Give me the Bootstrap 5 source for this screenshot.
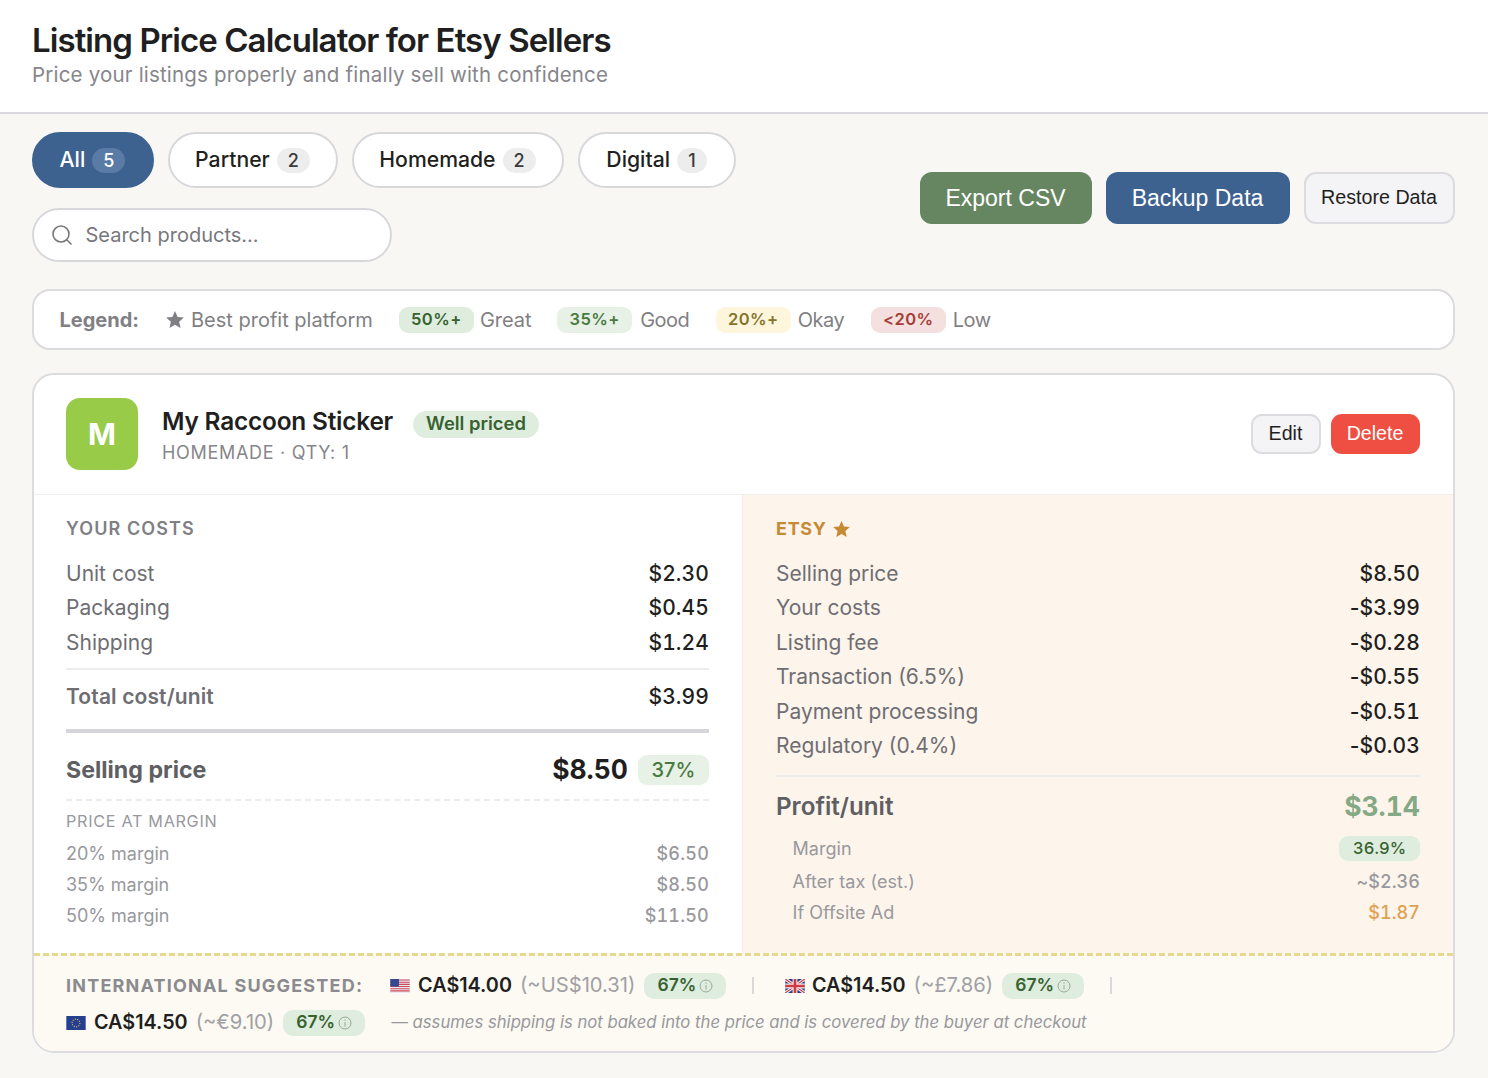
<!DOCTYPE html>
<html lang="en">
<head>
  <meta charset="UTF-8">
  <title>Listing Price Calculator for Etsy Sellers</title>
  <link href="https://cdn.jsdelivr.net/npm/bootstrap@5.3.3/dist/css/bootstrap.min.css" rel="stylesheet">
  <style>
    body { background: #f8f7f4; font-family: Inter, "Liberation Sans", sans-serif; color: #1f1f21; }
    .top-head { background: #fff; border-bottom: 2px solid #d9d9dd; height: 114px; padding: 20px 32px 0; }
    .top-head h1 { font-size: 33px; font-weight: 600; letter-spacing: -.93px; line-height: 40px; margin: 0; color: #1f1f21; }
    .top-head p { font-size: 20.5px; letter-spacing: .19px; line-height: 28px; margin: 1px 0 0; color: #86868b; }
    .page-wrap { padding: 18px 33.5px 0 31.5px; }
    .tool-left { width: 720px; }
    .pill-tab { height: 56px; border: 2px solid #d8d8dc; border-radius: 28px; background: #fff; padding: 0; font-size: 21.2px; font-weight: 500; color: #1f1f21; gap: 7px; }
    .pill-tab.is-on { background: #3d6290; border-color: #3d6290; color: #fff; }
    .tab-all { width: 122px; }
    .tab-partner { width: 170px; }
    .tab-homemade { width: 212px; }
    .tab-digital { width: 158px; }
    .pill-count { font-size: 18px; height: 25px; min-width: 24px; padding: 0 11px; border-radius: 13px; background: #ededee; color: #3a3a3c; display: flex; align-items: center; justify-content: center; }
    .is-on .pill-count { background: #5a7ba5; color: #fff; }
    .search-box { width: 360px; height: 54px; margin-top: 20px; border: 2px solid #d8d8dc; border-radius: 28px; background: #fff; padding-left: 17px; gap: 13px; font-size: 20px; color: #77777c; }
    .act-row { gap: 14px; margin-top: 2px; }
    .act-btn { font-family: "Liberation Sans", sans-serif; border-radius: 12px; height: 52px; border: 1px solid transparent; font-size: 23px; color: #fff; padding: 0; }
    .act-btn:hover { color: #fff; }
    .btn-export { width: 172px; background: #668661; }
    .btn-backup { width: 184px; background: #3d6290; }
    .btn-restore { width: 151px; background: #f4f4f6; border: 2px solid #dcdce0; color: #1f1f21; font-size: 19.7px; }
    .legend-bar { margin-top: 27px; height: 61px; background: #fff; border: 2px solid #dcdcdf; border-radius: 18px; padding-left: 26px; font-size: 20px; color: #7f7f84; }
    .legend-title { font-weight: 700; margin-right: 27px; }
    .legend-txt { margin-left: 7px; margin-right: 26px; }
    .legend-great { margin-left: 6px; margin-right: 25.5px; }
    .legend-word { letter-spacing: -.5px; margin-right: 26.5px; }
    .legend-good { margin-left: 8px; }
    .tag-pct { height: 26px; width: 75px; border-radius: 9px; font-size: 16.5px; font-weight: 600; letter-spacing: .45px; display: inline-flex; align-items: center; justify-content: center; }
    .tone-great { background: #dfeddf; color: #37622f; }
    .tone-good { background: #e7f1e5; color: #4a7a43; }
    .tone-okay { background: #fdf6dc; color: #86742a; }
    .tone-low { background: #f3e0df; color: #a53c38; }
    .prod-card { margin-top: 23px; background: #fff; border: 2px solid #dcdce0; border-radius: 22px; overflow: hidden; }
    .prod-head { height: 120px; padding: 0 33px 0 32.5px; border-bottom: 1px solid #eeeeef; gap: 24px; }
    .prod-logo { width: 72px; height: 72px; background: #97cb48; border-radius: 14px; color: #fff; font-size: 30px; font-weight: 700; margin-bottom: 1px; }
    .prod-name { font-size: 24.4px; font-weight: 600; line-height: 32px; letter-spacing: -.2px; }
    .prod-tag { background: #dfeddf; color: #37622f; font-size: 18.4px; font-weight: 600; height: 27px; border-radius: 14px; padding: 0 13px; margin: 6px 0 0 20px; display: flex; align-items: center; }
    .prod-meta { font-size: 18px; letter-spacing: .7px; color: #86868b; line-height: 24px; margin-top: 3px; }
    .small-btn { font-family: "Liberation Sans", sans-serif; height: 40px; border-radius: 11px; padding: 0; font-size: 19.6px; margin-bottom: 1px; }
    .btn-edit { width: 70px; background: #f4f4f6; border: 2px solid #dcdce0; color: #1f1f21; }
    .btn-del { width: 89px; background: #ee4f42; border: 0; color: #fff; margin-left: 10px; }
    .btn-del:hover { color: #fff; background: #ee4f42; }
    .cost-col { width: 709.5px; padding: 21px 33px 0 32.5px; height: 458px; border-right: 1px solid #eeeeef; }
    .plat-col { flex: 1; padding: 21px 32.5px 0 33px; background: #fdf4eb; height: 458px; }
    .sec-title { font-size: 18px; font-weight: 600; letter-spacing: 1.1px; color: #7f7f84; line-height: 26px; margin-bottom: 14.5px; }
    .sec-orange { color: #c68a34; font-weight: 700; letter-spacing: .7px; gap: 6px; }
    .cost-line { font-size: 21px; line-height: 34.5px; color: #6e6e73; }
    .cost-line b { font-weight: 500; color: #1f1f21; letter-spacing: .1px; font-variant-numeric: tabular-nums; }
    .neg-sign { font-variant-numeric: normal; }
    .total-line { border-top: 2px solid #ececee; margin-top: 8px; padding-top: 10px; font-weight: 600; height: 60.5px; letter-spacing: .13px; }
    .thick-rule { border-top: 4px solid #d5d5da; }
    .sell-line { height: 66px; padding-top: 9px; font-size: 23.2px; font-weight: 700; color: #5e5e63; }
    .sell-price { font-size: 26.5px; color: #1f1f21; margin-right: 10px; font-variant-numeric: tabular-nums; }
    .sell-tag { width: 71px; height: 30px; border-radius: 9px; background: #e7f1e5; color: #4a7a43; font-size: 20px; font-weight: 500; display: flex; align-items: center; justify-content: center; }
    .margin-box { border-top: 2px dashed #ececee; padding-top: 8px; }
    .margin-head { font-size: 16.2px; letter-spacing: .7px; color: #98989d; line-height: 24px; margin-bottom: 5px; }
    .margin-line { font-size: 18px; line-height: 31px; color: #98989d; }
    .margin-line b { font-weight: 500; letter-spacing: .2px; font-variant-numeric: tabular-nums; }
    .profit-rule { border-top: 2px solid #ececec; margin-top: 11px; }
    .profit-line { height: 54.5px; padding-top: 6px; font-size: 24.2px; font-weight: 600; color: #5e5e63; }
    .profit-val { font-size: 26.5px; font-weight: 700; color: #85a985; font-variant-numeric: tabular-nums; }
    .sub-line { font-size: 18px; letter-spacing: .05px; line-height: 31.5px; color: #98989d; padding-left: 16.5px; }
    .sub-line b { font-weight: 500; font-variant-numeric: tabular-nums; }
    .sub-first { height: 34.5px; }
    .tag-margin { width: 81px; height: 25px; border-radius: 9px; background: #dfeddf; color: #37622f; font-size: 16.5px; font-weight: 500; display: flex; align-items: center; justify-content: center; font-variant-numeric: tabular-nums; }
    .val-orange { color: #e0a050; }
    .intl-foot { border-top: 3px dashed #e6d88e; background: #fcfaf2; height: 98px; padding: 14px 32.5px 0; }
    .intl-row { height: 31px; margin-bottom: 6px; }
    .intl-title { font-size: 18px; font-weight: 700; letter-spacing: 1.2px; color: #8a8a8f; margin-right: 27px; }
    .flag-icon { width: 20px; height: 14px; margin-right: 8px; flex: none; }
    .flag-gb { margin-right: 6.5px; }
    .intl-price { font-size: 19.8px; font-weight: 600; margin-right: 8px; }
    .intl-conv { font-size: 20.2px; color: #a0a0a5; margin-right: 9px; }
    .intl-tag { width: 82px; height: 26px; border-radius: 10px; background: #dfeddf; color: #37622f; font-size: 17.5px; font-weight: 600; gap: 3px; display: flex; align-items: center; justify-content: center; }
    .intl-sep { width: 2px; height: 17px; background: #d8d8dc; margin: 0 31px 0 26px; }
    .intl-note { font-size: 16.68px; font-style: italic; color: #98989d; margin-left: 26px; }
  </style>
</head>
<body>

  <header class="top-head">
    <h1>Listing Price Calculator for Etsy Sellers</h1>
    <p>Price your listings properly and finally sell with confidence</p>
  </header>

  <div class="page-wrap">
    <!-- Filters and actions -->
    <div class="d-flex justify-content-between align-items-center">
      <div class="tool-left">
        <div class="d-flex" style="gap:14px">
          <button class="btn pill-tab tab-all is-on d-flex align-items-center justify-content-center">All <span class="pill-count">5</span></button>
          <button class="btn pill-tab tab-partner d-flex align-items-center justify-content-center">Partner <span class="pill-count">2</span></button>
          <button class="btn pill-tab tab-homemade d-flex align-items-center justify-content-center">Homemade <span class="pill-count">2</span></button>
          <button class="btn pill-tab tab-digital d-flex align-items-center justify-content-center">Digital <span class="pill-count">1</span></button>
        </div>
        <div class="search-box d-flex align-items-center">
          <svg width="22" height="22" viewBox="0 0 22 22" fill="none" stroke="#77777c" stroke-width="1.6" stroke-linecap="round"><circle cx="10" cy="10" r="8"/><path d="M16 16l4 4"/></svg>
          <span>Search products...</span>
        </div>
      </div>
      <div class="d-flex act-row">
        <button class="btn act-btn btn-export">Export CSV</button>
        <button class="btn act-btn btn-backup">Backup Data</button>
        <button class="btn act-btn btn-restore">Restore Data</button>
      </div>
    </div>

    <!-- Legend -->
    <div class="legend-bar d-flex align-items-center">
      <span class="legend-title">Legend:</span>
      <svg width="18" height="17" viewBox="0 0 24 23" fill="#7f7f84"><path d="M12 0l3.500 8 8.500.8-6.400 5.700 1.900 8.500L12 18.600 4.500 23l1.900-8.500L0 8.800 8.500 8z"/></svg>
      <span class="legend-txt">Best profit platform</span>
      <span class="tag-pct tone-great">50%+</span><span class="legend-great">Great</span>
      <span class="tag-pct tone-good">35%+</span><span class="legend-txt legend-word legend-good">Good</span>
      <span class="tag-pct tone-okay">20%+</span><span class="legend-txt legend-word">Okay</span>
      <span class="tag-pct tone-low">&lt;20%</span><span class="legend-txt legend-word">Low</span>
    </div>

    <!-- Product card -->
    <div class="prod-card">
      <div class="prod-head d-flex align-items-center">
        <div class="prod-logo d-flex align-items-center justify-content-center">M</div>
        <div class="flex-grow-1">
          <div class="d-flex align-items-center">
            <span class="prod-name">My Raccoon Sticker</span>
            <span class="prod-tag">Well priced</span>
          </div>
          <div class="prod-meta">HOMEMADE · QTY: 1</div>
        </div>
        <div class="d-flex">
          <button class="btn small-btn btn-edit">Edit</button>
          <button class="btn small-btn btn-del">Delete</button>
        </div>
      </div>

      <div class="d-flex">
        <div class="cost-col">
          <div class="sec-title">YOUR COSTS</div>
          <div class="cost-line d-flex justify-content-between"><span>Unit cost</span><b>$2.30</b></div>
          <div class="cost-line d-flex justify-content-between"><span>Packaging</span><b>$0.45</b></div>
          <div class="cost-line d-flex justify-content-between"><span>Shipping</span><b>$1.24</b></div>
          <div class="cost-line total-line d-flex justify-content-between"><span>Total cost/unit</span><b>$3.99</b></div>
          <div class="thick-rule"></div>
          <div class="sell-line d-flex justify-content-between align-items-center">
            <span>Selling price</span>
            <span class="d-flex align-items-center"><span class="sell-price">$8.50</span><span class="sell-tag">37%</span></span>
          </div>
          <div class="margin-box">
            <div class="margin-head">PRICE AT MARGIN</div>
            <div class="margin-line d-flex justify-content-between"><span>20% margin</span><b>$6.50</b></div>
            <div class="margin-line d-flex justify-content-between"><span>35% margin</span><b>$8.50</b></div>
            <div class="margin-line d-flex justify-content-between"><span>50% margin</span><b>$11.50</b></div>
          </div>
        </div>

        <div class="plat-col">
          <div class="sec-title sec-orange d-flex align-items-center">ETSY
            <svg width="17" height="16" viewBox="0 0 24 23" fill="#c68a34"><path d="M12 0l3.500 8 8.500.8-6.400 5.700 1.900 8.500L12 18.600 4.500 23l1.900-8.500L0 8.800 8.500 8z"/></svg>
          </div>
          <div class="cost-line d-flex justify-content-between"><span>Selling price</span><b>$8.50</b></div>
          <div class="cost-line d-flex justify-content-between"><span>Your costs</span><b><span class="neg-sign">-</span>$3.99</b></div>
          <div class="cost-line d-flex justify-content-between"><span>Listing fee</span><b><span class="neg-sign">-</span>$0.28</b></div>
          <div class="cost-line d-flex justify-content-between"><span>Transaction (6.5%)</span><b><span class="neg-sign">-</span>$0.55</b></div>
          <div class="cost-line d-flex justify-content-between"><span>Payment processing</span><b><span class="neg-sign">-</span>$0.51</b></div>
          <div class="cost-line d-flex justify-content-between"><span>Regulatory (0.4%)</span><b><span class="neg-sign">-</span>$0.03</b></div>
          <div class="profit-rule"></div>
          <div class="profit-line d-flex justify-content-between align-items-center"><span>Profit/unit</span><span class="profit-val">$3.14</span></div>
          <div class="sub-line sub-first d-flex justify-content-between align-items-center"><span>Margin</span><span class="tag-margin">36.9%</span></div>
          <div class="sub-line d-flex justify-content-between"><span>After tax (est.)</span><b>~$2.36</b></div>
          <div class="sub-line d-flex justify-content-between"><span>If Offsite Ad</span><b class="val-orange">$1.87</b></div>
        </div>
      </div>

      <!-- International -->
      <div class="intl-foot">
        <div class="intl-row d-flex align-items-center">
          <span class="intl-title">INTERNATIONAL SUGGESTED:</span>
          <svg class="flag-icon" viewBox="0 0 18 13"><rect width="18" height="13" fill="#e8e8ee"/><path d="M0 1h18M0 3h18M0 5h18M0 7h18M0 9h18M0 11h18" stroke="#cf4a55" stroke-width="1"/><rect width="8" height="7" fill="#35478f"/></svg>
          <span class="intl-price">CA$14.00</span>
          <span class="intl-conv">(~US$10.31)</span>
          <span class="intl-tag">67% <svg width="14" height="14" viewBox="0 0 14 14" fill="none" stroke="#98a898"><circle cx="7" cy="7" r="6"/><path d="M7 6v4.500M7 3.500v1.200"/></svg></span>
          <span class="intl-sep"></span>
          <svg class="flag-icon flag-gb" viewBox="0 0 18 13"><rect width="18" height="13" fill="#2f3f86"/><path d="M0 0l18 13M18 0L0 13" stroke="#eee" stroke-width="3"/><path d="M0 0l18 13M18 0L0 13" stroke="#cf3a45" stroke-width="1"/><path d="M9 0v13M0 6.500h18" stroke="#eee" stroke-width="4.500"/><path d="M9 0v13M0 6.500h18" stroke="#cf3a45" stroke-width="2.500"/></svg>
          <span class="intl-price">CA$14.50</span>
          <span class="intl-conv">(~£7.86)</span>
          <span class="intl-tag">67% <svg width="14" height="14" viewBox="0 0 14 14" fill="none" stroke="#98a898"><circle cx="7" cy="7" r="6"/><path d="M7 6v4.500M7 3.500v1.200"/></svg></span>
          <span class="intl-sep"></span>
        </div>
        <div class="intl-row d-flex align-items-center">
          <svg class="flag-icon" viewBox="0 0 18 13"><rect width="18" height="13" fill="#26408f"/><circle cx="9" cy="6.500" r="3.600" fill="none" stroke="#d9c255" stroke-width="1" stroke-dasharray="1 1.200"/></svg>
          <span class="intl-price">CA$14.50</span>
          <span class="intl-conv">(~€9.10)</span>
          <span class="intl-tag">67% <svg width="14" height="14" viewBox="0 0 14 14" fill="none" stroke="#98a898"><circle cx="7" cy="7" r="6"/><path d="M7 6v4.500M7 3.500v1.200"/></svg></span>
          <span class="intl-note">— assumes shipping is not baked into the price and is covered by the buyer at checkout</span>
        </div>
      </div>
    </div>
  </div>

  <script src="https://cdn.jsdelivr.net/npm/bootstrap@5.3.3/dist/js/bootstrap.bundle.min.js"></script>
</body>
</html>
